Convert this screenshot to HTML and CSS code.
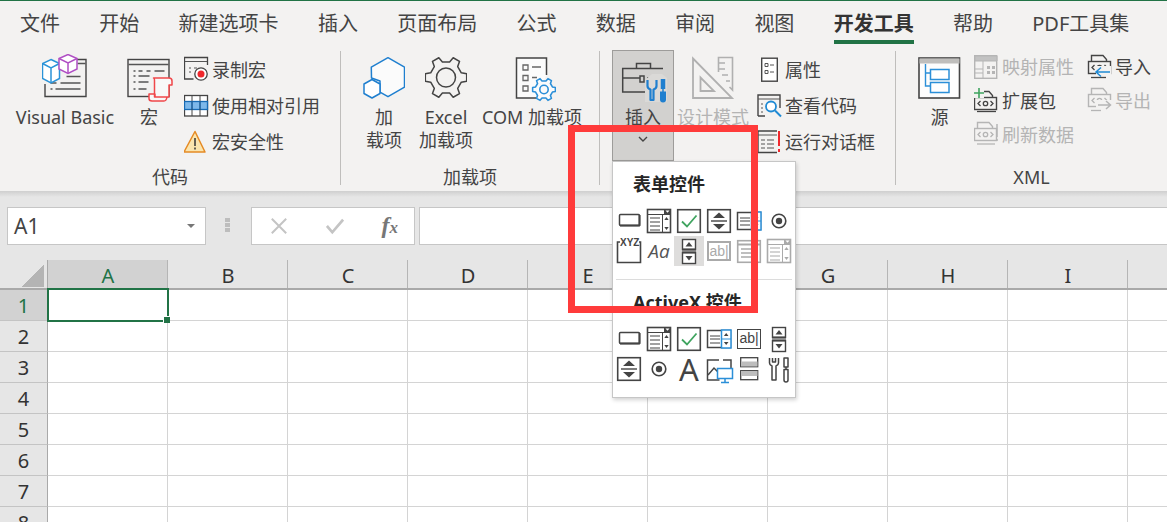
FILE: index.html
```html
<!DOCTYPE html>
<html lang="zh-CN">
<head>
<meta charset="utf-8">
<title>Excel 开发工具</title>
<link rel="stylesheet" href="styles.css">
</head>
<body>
<svg class="defs" aria-hidden="true">
  <defs>
    <polygon id="gear" points="15.3,-4.68 20.68,-3.65 20.68,3.65 15.3,4.68 11.7,10.91 13.5,16.08 7.18,19.74 3.6,15.59 -3.6,15.59 -7.18,19.74 -13.5,16.08 -11.7,10.91 -15.3,4.68 -20.68,3.65 -20.68,-3.65 -15.3,-4.68 -11.7,-10.91 -13.5,-16.08 -7.18,-19.74 -3.6,-15.59 3.6,-15.59 7.18,-19.74 13.5,-16.08 11.7,-10.91"/>
    <symbol id="c-btn" viewBox="0 0 30 30"><rect x="5.5" y="8.5" width="20" height="11" rx="1" fill="#fff" stroke="currentColor" stroke-width="1.5"/><path d="M6 19.5h20M25.5 9v11" stroke="currentColor" stroke-width="2" fill="none"/></symbol>
    <symbol id="c-combo" viewBox="0 0 30 30"><rect x="3.5" y="3.5" width="23" height="23" fill="#fff" stroke="currentColor" stroke-width="1.6"/><path d="M3 8.5h24M18.5 8v18" stroke="currentColor" fill="none"/><path d="M20 3h7v5h-7z" fill="currentColor"/><path d="M21.5 4.5h4l-2 2.2z" fill="#fff"/><path d="M6 12h10M6 16h10M6 20h10M6 24h10" stroke="currentColor" stroke-width="1.2" fill="none"/><path d="M22.5 11l-2.2 3h4.4zM22.5 24l-2.2-3h4.4z" fill="currentColor"/></symbol>
    <symbol id="c-check" viewBox="0 0 30 30"><rect x="3.7" y="3.7" width="22.6" height="22.6" fill="#fff" stroke="currentColor" stroke-width="1.6"/><path d="M8 15.5l5 5 9.5-11" stroke="#3fa45f" stroke-width="1.8" fill="none"/></symbol>
    <symbol id="c-spinbox" viewBox="0 0 30 30"><rect x="3.7" y="3.7" width="22.6" height="22.6" fill="#fff" stroke="currentColor" stroke-width="1.6"/><path d="M15 6.5l-6 5.5h12zM15 23.5l-6-5.5h12z" fill="currentColor"/><path d="M7 15h16" stroke="currentColor" stroke-width="1.4"/></symbol>
    <symbol id="c-listblue" viewBox="0 0 30 30"><rect x="3.5" y="6.5" width="23" height="17" fill="#fff" stroke="currentColor" stroke-width="1.5"/><path d="M6 12h10M6 15h10M6 19h10" stroke="currentColor" fill="none"/><rect x="17.5" y="6" width="9.5" height="18" fill="#fff" stroke="#2b8fd8" stroke-width="1.5"/><path d="M17.5 15h9.5" stroke="#2b8fd8"/><path d="M22.2 9l-2.3 3h4.6zM22.2 21l-2.3-3h4.6z" fill="currentColor"/></symbol>
    <symbol id="c-radio" viewBox="0 0 30 30"><circle cx="15" cy="15" r="6.8" fill="#fff" stroke="currentColor" stroke-width="1.6"/><circle cx="15" cy="15" r="3.2" fill="currentColor"/></symbol>
    <symbol id="c-scroll" viewBox="0 0 30 30"><rect x="8.5" y="3.5" width="13" height="10" fill="#fff" stroke="currentColor" stroke-width="1.4"/><rect x="8.5" y="16.5" width="13" height="11" fill="#fff" stroke="currentColor" stroke-width="1.4"/><path d="M15 6l-3.5 4.5h7zM15 24.5l-3.5-4.5h7z" fill="currentColor"/><path d="M8 13.5h14M8 16.5h14" stroke="currentColor" stroke-width="2"/></symbol>
    <symbol id="c-list" viewBox="0 0 30 30"><rect x="3.7" y="4.7" width="22.6" height="21.6" fill="#fff" stroke="currentColor" stroke-width="1.6"/><path d="M4 8.5h22" stroke="currentColor" stroke-width="2"/><path d="M7 13h16M7 17h16M7 21h16" stroke="currentColor" stroke-width="1.3"/></symbol>
    <symbol id="c-img" viewBox="0 0 30 30"><path d="M19 6H27v8M15 6H3.5v20h12" fill="#fff" stroke="currentColor" stroke-width="1.5"/><path d="M4 21l6-7 4 4 3-2" stroke="currentColor" stroke-width="1.5" fill="none"/><rect x="13.5" y="14.5" width="15" height="10" fill="#fff" stroke="#2b8fd8" stroke-width="1.5"/><path d="M21 25v3M17 28.5h8" stroke="#2b8fd8" stroke-width="1.5"/></symbol>
    <symbol id="c-bars" viewBox="0 0 30 30"><rect x="6.7" y="3.7" width="17" height="9" fill="#fff" stroke="currentColor" stroke-width="1.3"/><rect x="7" y="7.5" width="16.5" height="5" fill="#bdbdbd"/><rect x="6.7" y="16.7" width="17" height="9" fill="#fff" stroke="currentColor" stroke-width="1.3"/><rect x="7" y="17" width="16.5" height="5" fill="#bdbdbd"/></symbol>
    <symbol id="c-tools" viewBox="0 0 30 30"><path d="M5.5 4v5c0 1.500 1.200 2.500 2.500 3v14h4V12c1.300-.5 2.500-1.500 2.500-3V4M8.500 4v4h3V4" fill="#fff" stroke="currentColor" stroke-width="1.5" stroke-linejoin="round"/><path d="M20 4h4v9h-4zM20 15.500h4v10.500a2 2 0 0 1-4 0zM22 13v3" fill="#fff" stroke="currentColor" stroke-width="1.5" stroke-linejoin="round"/></symbol>
    <g id="pkg">
      <path d="M4.500 6V.5H16l3.500 4V6" fill="none" stroke="currentColor" stroke-width="1.400"/>
      <rect x="1.500" y="6.500" width="22" height="12" fill="none" stroke="currentColor" stroke-width="1.400"/>
      <path d="M7.500 10l-2.500 2.500 2.500 2.500M17.500 10l2.500 2.500-2.500 2.500" fill="none" stroke="currentColor" stroke-width="1.300"/>
      <circle cx="12.500" cy="12.500" r="2.200" fill="none" stroke="currentColor" stroke-width="1.300"/>
    </g>
  </defs>
</svg>

<div class="topline"></div>
<nav class="tabs">
  <span class="tab">文件</span><span class="tab">开始</span><span class="tab">新建选项卡</span><span class="tab">插入</span><span class="tab">页面布局</span><span class="tab">公式</span><span class="tab">数据</span><span class="tab">审阅</span><span class="tab">视图</span><span class="tab active">开发工具</span><span class="tab">帮助</span><span class="tab">PDF工具集</span>
</nav>

<section class="ribbon">
  <div class="group g-code">
    <div class="gbody">
      <div class="big b-vb">
        <svg class="ico w47" viewBox="41.5 54 47 52">
          <path d="M76 59.500h9.500v37h-41V84" fill="none" stroke="#444" stroke-width="1.400"/>
          <path d="M77 63.500h8M66 76.500h14M50 83h6M60 83h20M50 89h2M55 89h25" stroke="#555" stroke-width="1.300" fill="none"/>
          <path d="M50.500 59.500l8.500 4v15l-8.500 4.500-8.500-4.500v-15z" fill="#fff" stroke="#2a93d8" stroke-width="1.500"/>
          <path d="M42 63.500l8.500 4.500 8.500-4.500M50.500 68v15" fill="none" stroke="#2a93d8" stroke-width="1.500"/>
          <path d="M67.500 54.500l9 4v10.500l-9 4.500-9-4.500V58.500z" fill="#fff" stroke="#b04fc4" stroke-width="1.500"/>
          <path d="M58.500 58.500l9 4.500 9-4.500M67.500 63v10" fill="none" stroke="#b04fc4" stroke-width="1.500"/>
        </svg>
        <span>Visual Basic</span>
      </div>
      <div class="big b-macro">
        <svg class="ico w48" viewBox="125.500 54 48 52">
          <rect x="128.500" y="59.500" width="41" height="37" fill="none" stroke="#444" stroke-width="1.400"/>
          <path d="M129 64.500h40M134 71h2M139 71h4M147 71h4M155 71h10M134 76h2M139 76h11M134 82h2M139 82h10M134 89h2M139 89h8" stroke="#555" stroke-width="1.300" fill="none"/>
          <path d="M154 78h15.500c2 0 3 1.500 3 3v4h-3V97h-14v-3h-6v4.500c0 1.500 1 2.500 3 2.500h12c1.500 0 2.500-1 3-4H155V81c0-1.500-.5-3-1-3z" fill="#f8f8f8" stroke="#f0474a" stroke-width="1.500" stroke-linejoin="round"/>
        </svg>
        <span>宏</span>
      </div>
      <div class="col c-code">
        <div class="small"><svg class="sico" viewBox="184 56 28 28"><path d="M184.500 76V57.500h23V65M184.500 76v3h9" fill="none" stroke="#444" stroke-width="1.300"/><path d="M185 61.500h22M189 68h2M189 72h2M194 68h3" stroke="#555" fill="none"/><circle cx="201" cy="74" r="6.200" fill="#fff" stroke="#444" stroke-width="1.300"/><circle cx="201" cy="74" r="3.500" fill="#f0282d"/></svg><span>录制宏</span></div>
        <div class="small"><svg class="sico" viewBox="184 91 28 28"><rect x="184.500" y="94.500" width="23" height="20.500" fill="#fff" stroke="#444" stroke-width="1.300"/><rect x="184.500" y="100.500" width="23" height="8" fill="#7db8ea" stroke="#176bb5" stroke-width="1.300"/><path d="M192 94v21M200 94v21" stroke="#444"/><path d="M192 100v8M200 100v8" stroke="#176bb5" stroke-width="1.300"/></svg><span>使用相对引用</span></div>
        <div class="small"><svg class="sico" viewBox="184 127 28 28"><path d="M195 130.500l10 20.500h-21z" fill="#fbe5ae" stroke="#e58a24" stroke-width="1.500" stroke-linejoin="round"/><path d="M195 137v8" stroke="#333" stroke-width="1.500"/><path d="M195 146.500v2" stroke="#333" stroke-width="1.500"/></svg><span>宏安全性</span></div>
      </div>
    </div>
    <div class="glabel">代码</div>
  </div>
  <div class="sep"></div>

  <div class="group g-addin">
    <div class="gbody">
      <div class="big b-addin">
        <svg class="ico w42" viewBox="363 54 42.500 52">
          <path d="M388 57.700l16.500 9.500v20l-16.500 9.500-8-4.500V81l-8.500-3-.2-10.800z" fill="#fbfbfb" stroke="#1f7fcf" stroke-width="1.500" stroke-linejoin="round"/>
          <path d="M372 79.500l8 4.500v9.500l-8 4.500-8-4.500V84z" fill="#fff" stroke="#1f7fcf" stroke-width="1.500" stroke-linejoin="round"/>
        </svg>
        <span>加</span><span>载项</span>
      </div>
      <div class="big b-excel">
        <svg class="ico w42" viewBox="425 54 42.500 52">
          <use href="#gear" transform="translate(446 77.500)" fill="none" stroke="#444" stroke-width="1.500" stroke-linejoin="round"/>
          <circle cx="446" cy="77.500" r="9.500" fill="none" stroke="#444" stroke-width="1.500"/>
        </svg>
        <span>Excel</span><span>加载项</span>
      </div>
      <div class="big b-com">
        <svg class="ico w48" viewBox="508 54 48 52">
          <path d="M546.500 75V58H516.500v40H536" fill="#fbfbfb" stroke="#444" stroke-width="1.500"/>
          <path d="M523 65h5v5h-5zM523 75.500h5v5h-5zM523 86h5v5h-5zM532 67h9M532 77.500h5" fill="none" stroke="#666" stroke-width="1.300"/>
          <use href="#gear" transform="translate(544 89.500) scale(.55)" fill="#fbfbfb" stroke="#2b8fd8" stroke-width="2.800" stroke-linejoin="round"/>
          <circle cx="544" cy="89.500" r="4.200" fill="none" stroke="#2b8fd8" stroke-width="1.600"/>
        </svg>
        <span>COM 加载项</span>
      </div>
    </div>
    <div class="glabel">加载项</div>
  </div>
  <div class="sep"></div>

  <div class="group g-ctrl">
    <div class="gbody">
      <div class="big b-insert">
        <svg class="ico w48" viewBox="619 54 48 52">
          <path d="M636.500 68v-4.500h14V68" fill="none" stroke="#444" stroke-width="1.500"/>
          <path d="M663 68.500h-40.300v23.500H647M622.700 78h17.300M647 78h4M640 76h4v6h-4z" fill="none" stroke="#444" stroke-width="1.500"/>
          <path d="M652 74h10l5 4v24h-22V80z" fill="#dad9d7"/>
          <path d="M647.500 80v6c0 2 1.500 3 3 3.500V100h3V89.500c1.500-.5 3-1.500 3-3.500v-6" fill="none" stroke="#1f7fcf" stroke-width="2.200" stroke-linejoin="round"/>
          <path d="M663 79v10" stroke="#1f7fcf" stroke-width="4.500"/>
          <path d="M663 88v4" stroke="#1f7fcf" stroke-width="1.500"/>
          <path d="M660 91.500h6v8a3 3 0 0 1-6 0z" fill="#1f7fcf"/>
        </svg>
        <span>插入</span>
        <svg class="chev" viewBox="0 0 10 6"><path d="M1 1l4 4 4-4" fill="none" stroke="#444" stroke-width="1.400"/></svg>
      </div>
      <div class="big dis b-design">
        <svg class="ico w72" viewBox="677 54 72 52">
          <path d="M693 58.500l39 39.500h-39zM700.500 77.500v13.500h13.500z" fill="none" stroke="#b0b0b0" stroke-width="1.800"/>
          <path d="M718.500 72V57.500h14V90l-3-3M719 63h6M719 69h6M722 75h6M726 81h4" fill="none" stroke="#b0b0b0" stroke-width="1.600"/>
        </svg>
        <span>设计模式</span>
      </div>
      <div class="col c-ctrl">
        <div class="small"><svg class="sico" viewBox="757 56 28 28"><rect x="761.700" y="58.200" width="15.600" height="23" fill="#fff" stroke="#444" stroke-width="1.400"/><path d="M765 63.500h3v3h-3zM765 70.500h3v3h-3z" fill="none" stroke="#555"/><path d="M770 65h4M770 72h4" stroke="#555"/></svg><span>属性</span></div>
        <div class="small"><svg class="sico" viewBox="757 91 28 28"><path d="M758 115V94h22v13M758 115h7" fill="none" stroke="#444" stroke-width="1.400"/><path d="M758 98h22M761 103h2M761 107h2M761 111h2" stroke="#555" fill="none"/><circle cx="771" cy="105.500" r="5" fill="#fff" stroke="#1f8ad4" stroke-width="1.800"/><path d="M775 109.500l6 6" stroke="#1f8ad4" stroke-width="2"/></svg><span>查看代码</span></div>
        <div class="small"><svg class="sico" viewBox="757 127 28 28"><path d="M777 130h-19v21.500h19" fill="none" stroke="#444" stroke-width="1.400"/><path d="M758 134h19M761 139h4M767 139h7M761 143h4M767 143h7M761 147h4M767 147h7" stroke="#555" fill="none"/><path d="M779 130v15" stroke="#f0282d" stroke-width="2"/><path d="M779 148v3" stroke="#f0282d" stroke-width="2"/></svg><span>运行对话框</span></div>
      </div>
    </div>
    <div class="glabel">控件</div>
  </div>
  <div class="sep"></div>

  <div class="group g-xml">
    <div class="gbody">
      <div class="big b-source">
        <svg class="ico w42" viewBox="918 54 42.500 52">
          <rect x="919" y="58" width="40.500" height="40" fill="#fdfdfd" stroke="#444" stroke-width="1.600"/>
          <rect x="919.500" y="58.500" width="40" height="5" fill="#bfbebc"/>
          <path d="M925.500 64v22h4.500M925.500 73h4.500" fill="none" stroke="#2b8fd8" stroke-width="1.400"/>
          <rect x="930.500" y="69.500" width="18.500" height="10" fill="#fff" stroke="#2b8fd8" stroke-width="1.500"/>
          <rect x="930.500" y="82.500" width="18.500" height="10" fill="#fff" stroke="#2b8fd8" stroke-width="1.500"/>
        </svg>
        <span>源</span>
      </div>
      <div class="col c-xml1">
        <div class="small dis"><svg class="sico" viewBox="974 52 28 28"><rect x="974.700" y="54.700" width="22" height="22.600" fill="none" stroke="#b5b5b5" stroke-width="1.400"/><path d="M975 55h22v5h-22zM983 60v17M975 68h8M975 72h8" fill="#c2c2c2" stroke="#b5b5b5"/><path d="M987 65h3v3h-3zM992 65h3v3h-3zM987 70h3v3h-3zM992 70h3v3h-3z" fill="#b5b5b5"/></svg><span>映射属性</span></div>
        <div class="small"><svg class="sico c-dark" viewBox="974 87 28 28"><use href="#pkg" transform="translate(973 91)"/><path d="M977 111.500h19" stroke="#444" stroke-width="1.300"/><rect x="974" y="88" width="10" height="10" fill="#f3f2f1"/><path d="M979 88v10M974 93h10" stroke="#3fa45f" stroke-width="1.600"/></svg><span>扩展包</span></div>
        <div class="small dis"><svg class="sico c-dim" viewBox="974 121 28 28"><use href="#pkg" transform="translate(973 122)"/><path d="M977 144h18" stroke="#b5b5b5" stroke-width="1.300"/><path d="M997 124v13M997 139v2" stroke="#b5b5b5" stroke-width="1.500"/></svg><span>刷新数据</span></div>
      </div>
      <div class="col c-xml2">
        <div class="small"><svg class="sico c-dark" viewBox="1087 52 28 28"><use href="#pkg" transform="translate(1087 54)"/><path d="M1091 76.500h15" stroke="#444" stroke-width="1.300"/><rect x="1096" y="65" width="15" height="10" fill="#f3f2f1"/><path d="M1110 71h-13M1101 66.500l-5 4.500 5 4.500" fill="none" stroke="#1f8ad4" stroke-width="1.500"/></svg><span>导入</span></div>
        <div class="small dis"><svg class="sico c-dim" viewBox="1087 87 28 28"><use href="#pkg" transform="translate(1087 88)"/><path d="M1091 110.500h10" stroke="#b5b5b5" stroke-width="1.300"/><rect x="1096" y="100" width="16" height="9" fill="#f3f2f1"/><path d="M1098 105h12M1106 101l4.500 4-4.500 4" fill="none" stroke="#b5b5b5" stroke-width="1.500"/></svg><span>导出</span></div>
      </div>
    </div>
    <div class="glabel">XML</div>
  </div>
</section>
<div class="shade"></div>

<section class="fbar">
  <div class="namebox"><span>A1</span><i class="caret"></i></div>
  <div class="grip"><i></i><i></i><i></i></div>
  <div class="fbtns">
    <svg class="fico" viewBox="0 0 20 20"><path d="M2 2l16 16M18 2L2 18" stroke="#c4c4c4" stroke-width="2.200" fill="none"/></svg>
    <svg class="fico" viewBox="0 0 20 20"><path d="M1 10l6 7L19 3" stroke="#c4c4c4" stroke-width="3" fill="none"/></svg>
    <span class="fx">f<small>x</small></span>
  </div>
  <div class="finput"></div>
</section>

<section class="sheet">
  <div class="colhead">
    <div class="corner"><i></i></div>
    <div class="ch sel">A</div><div class="ch">B</div><div class="ch">C</div><div class="ch">D</div><div class="ch">E</div><div class="ch">F</div><div class="ch">G</div><div class="ch">H</div><div class="ch">I</div><div class="ch last"></div>
  </div>
  <div class="row"><div class="rh sel">1</div><div class="cell active"><i class="handle"></i></div><div class="cell"></div><div class="cell"></div><div class="cell"></div><div class="cell"></div><div class="cell"></div><div class="cell"></div><div class="cell"></div><div class="cell"></div><div class="cell end"></div></div>
  <div class="row"><div class="rh">2</div><div class="cell"></div><div class="cell"></div><div class="cell"></div><div class="cell"></div><div class="cell"></div><div class="cell"></div><div class="cell"></div><div class="cell"></div><div class="cell"></div><div class="cell end"></div></div>
  <div class="row"><div class="rh">3</div><div class="cell"></div><div class="cell"></div><div class="cell"></div><div class="cell"></div><div class="cell"></div><div class="cell"></div><div class="cell"></div><div class="cell"></div><div class="cell"></div><div class="cell end"></div></div>
  <div class="row"><div class="rh">4</div><div class="cell"></div><div class="cell"></div><div class="cell"></div><div class="cell"></div><div class="cell"></div><div class="cell"></div><div class="cell"></div><div class="cell"></div><div class="cell"></div><div class="cell end"></div></div>
  <div class="row"><div class="rh">5</div><div class="cell"></div><div class="cell"></div><div class="cell"></div><div class="cell"></div><div class="cell"></div><div class="cell"></div><div class="cell"></div><div class="cell"></div><div class="cell"></div><div class="cell end"></div></div>
  <div class="row"><div class="rh">6</div><div class="cell"></div><div class="cell"></div><div class="cell"></div><div class="cell"></div><div class="cell"></div><div class="cell"></div><div class="cell"></div><div class="cell"></div><div class="cell"></div><div class="cell end"></div></div>
  <div class="row"><div class="rh">7</div><div class="cell"></div><div class="cell"></div><div class="cell"></div><div class="cell"></div><div class="cell"></div><div class="cell"></div><div class="cell"></div><div class="cell"></div><div class="cell"></div><div class="cell end"></div></div>
  <div class="row"><div class="rh">8</div><div class="cell"></div><div class="cell"></div><div class="cell"></div><div class="cell"></div><div class="cell"></div><div class="cell"></div><div class="cell"></div><div class="cell"></div><div class="cell"></div><div class="cell end"></div></div>
</section>

<div class="menu">
  <div class="mhead">表单控件</div>
  <div class="mgrid">
    <div class="mc"><svg><use href="#c-btn"/></svg></div>
    <div class="mc"><svg><use href="#c-combo"/></svg></div>
    <div class="mc"><svg><use href="#c-check"/></svg></div>
    <div class="mc"><svg><use href="#c-spinbox"/></svg></div>
    <div class="mc"><svg><use href="#c-listblue"/></svg></div>
    <div class="mc"><svg><use href="#c-radio"/></svg></div>
    <div class="mc xyz"><svg viewBox="0 0 30 30"><path d="M6 6H3.500v20.500h23V6H25" fill="none" stroke="currentColor" stroke-width="1.600"/></svg><span>XYZ</span></div>
    <div class="mc aa">Aa</div>
    <div class="mc hover"><svg><use href="#c-scroll"/></svg></div>
    <div class="mc dim ab"><span>ab|</span></div>
    <div class="mc dim"><svg><use href="#c-list"/></svg></div>
    <div class="mc dim"><svg><use href="#c-combo"/></svg></div>
  </div>
  <div class="mline"></div>
  <div class="mhead mhead2">ActiveX 控件</div>
  <div class="mgrid">
    <div class="mc"><svg><use href="#c-btn"/></svg></div>
    <div class="mc"><svg><use href="#c-combo"/></svg></div>
    <div class="mc"><svg><use href="#c-check"/></svg></div>
    <div class="mc"><svg><use href="#c-listblue"/></svg></div>
    <div class="mc ab abdark"><span>ab|</span></div>
    <div class="mc"><svg><use href="#c-scroll"/></svg></div>
    <div class="mc"><svg><use href="#c-spinbox"/></svg></div>
    <div class="mc"><svg><use href="#c-radio"/></svg></div>
    <div class="mc bigA">A</div>
    <div class="mc"><svg><use href="#c-img"/></svg></div>
    <div class="mc"><svg><use href="#c-bars"/></svg></div>
    <div class="mc"><svg><use href="#c-tools"/></svg></div>
  </div>
</div>

<div class="redbox"></div>
</body>
</html>
```
FILE: styles.css
```css
* { box-sizing: border-box; }
html, body { margin: 0; padding: 0; }
body {
  position: relative;
  width: 1167px;
  height: 522px;
  overflow: hidden;
  background: #fff;
  color: #444;
  font-family: "Noto Sans", "Noto Sans CJK SC", sans-serif;
  font-size: 18px;
}
.defs { position: absolute; width: 0; height: 0; }

.topline { height: 1px; background: #217346; }

.tabs {
  display: flex;
  gap: 39.3px;
  height: 49px;
  padding: 7px 0 0 20px;
  background: #f3f2f1;
  font-size: 20px;
  line-height: 32px;
  white-space: nowrap;
}
.tab { display: block; height: 36px; }
.tab.active {
  font-weight: 700;
  color: #333;
  border-bottom: 4px solid #217346;
  height: 36px;
}

.ribbon {
  display: flex;
  height: 141px;
  background: #f3f2f1;
}
.group { display: flex; flex-direction: column; }
.gbody { display: flex; height: 115px; }
.glabel { text-align: center; line-height: 24px; font-size: 18px; }
.g-code { width: 340px; }
.g-addin { width: 258px; }
.g-ctrl { width: 295px; }
.g-xml { width: 271px; }
.sep { width: 1px; height: 134px; margin-top: 1px; background: #bfbebc; }

.big {
  display: flex;
  flex-direction: column;
  align-items: center;
  line-height: 23px;
  padding-top: 4px;
  white-space: nowrap;
}
.ico { display: block; height: 52px; flex: none; }
.w42 { width: 42.5px; }
.w46 { width: 46px; }
.w47 { width: 47px; }
.w48 { width: 48px; }
.w72 { width: 72px; }
.b-vb { width: 100px; margin-left: 15px; }
.b-macro { width: 42px; margin-left: 13px; }
.b-addin { width: 42px; margin-left: 22px; }
.b-excel { width: 60px; margin-left: 11px; }
.b-com { width: 104px; margin-left: 4px; }
.b-insert {
  width: 62px;
  height: 111px;
  margin-left: 12px;
  background: #d2d1cf;
  border: 1px solid #9d9c9a;
  padding-top: 3px;
}
.chev { width: 10px; height: 6px; margin-top: 7px; }
.b-design { width: 72px; margin-left: 3px; }
.b-source { width: 43px; margin-left: 22px; }
.dis { color: #b4b4b4; }

.col { display: flex; flex-direction: column; }
.c-code { margin: 2px 0 0 14px; }
.c-ctrl { margin: 2px 0 0 8px; }
.c-xml1 { margin-left: 13px; }
.c-xml2 { margin-left: 13px; }
.small {
  display: flex;
  align-items: center;
  height: 36px;
  white-space: nowrap;
  line-height: 24px;
}
.c-xml1 .small, .c-xml2 .small { height: 34px; }
.sico { display: block; width: 28px; height: 28px; flex: none; }
.c-dark { color: #444; }
.c-dim { color: #b5b5b5; }

.shade {
  height: 6px;
  background: linear-gradient(#cfcfcf, #e6e6e6);
}

.fbar {
  display: flex;
  align-items: flex-start;
  height: 63px;
  padding: 10px 0 0 7px;
  background: #e6e6e6;
}
.namebox {
  display: flex;
  align-items: center;
  justify-content: space-between;
  width: 199px;
  height: 38px;
  padding: 0 10px 0 6px;
  background: #fff;
  border: 1px solid #c6c6c6;
  font-size: 21px;
}
.caret {
  width: 0;
  height: 0;
  border-left: 4px solid transparent;
  border-right: 4px solid transparent;
  border-top: 4px solid #777;
}
.grip {
  display: flex;
  flex-direction: column;
  gap: 1px;
  width: 45px;
  padding: 11px 0 0 19px;
}
.grip i { display: block; width: 5px; height: 4px; background: #bdbdbd; }
.fbtns {
  display: flex;
  align-items: center;
  justify-content: space-between;
  width: 164px;
  height: 38px;
  padding: 0 16px 0 18px;
  background: #fff;
  border: 1px solid #c6c6c6;
}
.fico { width: 18px; height: 18px; }
.fx {
  font-family: "Liberation Serif", serif;
  font-style: italic;
  font-weight: 700;
  font-size: 24px;
  color: #777;
  line-height: 20px;
}
.fx small { font-size: 17px; }
.finput {
  flex: 1;
  height: 38px;
  margin-left: 4px;
  background: #fff;
  border: 1px solid #c6c6c6;
  border-right: 0;
}

.sheet { background: #fff; height: 262px; overflow: hidden; }
.colhead {
  display: flex;
  height: 30px;
  background: #e6e6e6;
  border-bottom: 2px solid #a9a9a9;
}
.corner {
  width: 48px;
  height: 28px;
  border-right: 1px solid #a9a9a9;
  padding: 4px 0 0 21px;
}
.corner i {
  display: block;
  width: 23px;
  height: 23px;
  background: linear-gradient(to bottom right, transparent 50%, #b4b4b4 50%);
}
.ch {
  width: 120px;
  height: 28px;
  padding-left: 1px;
  text-align: center;
  font-size: 20px;
  line-height: 32px;
  color: #333;
  border-right: 1px solid #b5b5b5;
}
.ch.sel { background: #d2d2d2; color: #217346; }
.ch.last { border-right: 0; width: 39px; }
.row { display: flex; height: 31px; }
.rh {
  width: 48px;
  flex: none;
  background: #e6e6e6;
  border-right: 1px solid #a9a9a9;
  border-bottom: 1px solid #c4c4c4;
  text-align: center;
  font-size: 20px;
  line-height: 32px;
  color: #333;
}
.rh.sel { background: #d2d2d2; color: #217346; }
.cell {
  position: relative;
  width: 120px;
  flex: none;
  border-right: 1px solid #d4d4d4;
  border-bottom: 1px solid #d4d4d4;
}
.cell.end { width: 39px; border-right: 0; }
.cell.active::before {
  content: "";
  box-sizing: border-box;
  position: absolute;
  left: -1px;
  top: -2px;
  width: 122px;
  height: 34px;
  border: 2px solid #217346;
}
.handle {
  position: absolute;
  left: 115px;
  top: 26px;
  width: 7px;
  height: 7px;
  background: #217346;
  border: 1px solid #fff;
  border-width: 1px 0 0 1px;
  z-index: 1;
}

.menu {
  position: absolute;
  left: 612px;
  top: 161px;
  width: 184px;
  height: 237px;
  background: #fff;
  border: 1px solid #c6c6c6;
  box-shadow: 1px 2px 4px rgba(0, 0, 0, .18);
  padding: 0 1px;
}
.mhead {
  height: 44px;
  padding-left: 19px;
  font-weight: 700;
  font-size: 18px;
  line-height: 44px;
  color: #262626;
}
.mhead2 { line-height: 45px; }
.mline { height: 1px; margin: 13px 2px 0; background: #dcdcdc; }
.mgrid { display: grid; grid-template-columns: repeat(6, 30px); grid-auto-rows: 30px; }
.mc {
  position: relative;
  display: flex;
  align-items: center;
  justify-content: center;
  width: 30px;
  height: 30px;
  color: #444;
}
.mc svg { display: block; width: 30px; height: 30px; flex: none; }
.mc.hover { background: #dedddc; }
.mc.dim { color: #aaa; }
.xyz svg { position: absolute; left: 0; top: 0; }
.xyz span {
  position: absolute;
  left: 6px;
  top: 1px;
  font-family: "Liberation Sans", sans-serif;
  font-weight: 700;
  font-size: 10px;
  line-height: 11px;
  color: #444;
}
.aa {
  font-family: "Open Sans", sans-serif;
  font-style: italic;
  font-size: 19px;
  color: #555;
}
.ab span {
  display: block;
  width: 24px;
  height: 20px;
  border: 2px solid currentColor;
  font-family: "Liberation Sans", sans-serif;
  font-size: 14px;
  line-height: 16px;
  text-align: center;
  background: #fff;
}
.abdark span { border-width: 1.5px; }
.bigA { font-size: 31px; line-height: 30px; }

.redbox {
  position: absolute;
  left: 568px;
  top: 125px;
  width: 190px;
  height: 188px;
  border: 7px solid #ff3b3b;
  pointer-events: none;
}
```
